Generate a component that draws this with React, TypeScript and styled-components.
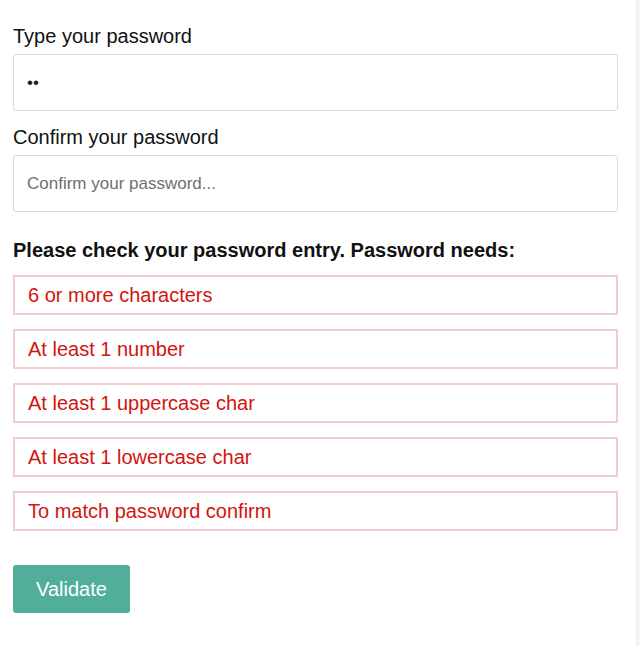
import React from "react";
import styled, { createGlobalStyle } from "styled-components";

const Global = createGlobalStyle`
  html, body { margin: 0; padding: 0; background: #fff; }
  body { font-family: "Liberation Sans", Arial, Helvetica, sans-serif; }
  * { box-sizing: border-box; }
`;

const Page = styled.div`
  width: 640px;
  min-height: 646px;
  display: flex;
`;

const Main = styled.form`
  flex: 1;
  padding: 24px 18px 0 13px;
  display: flex;
  flex-direction: column;
`;

const Edge = styled.div`
  width: 4px;
  background: #f3f3f8;
  border-left: 1px solid #ebebf2;
`;

const Label = styled.label`
  font-size: 20px;
  color: #111;
  line-height: 24px;
  margin-bottom: 6px;
`;

const Input = styled.input`
  height: 57px;
  width: 100%;
  border: 1px solid #dadada;
  border-radius: 3px;
  padding: 0 13px;
  font-family: inherit;
  font-size: 17px;
  color: #222;
  margin-bottom: 14px;
  outline: none;
  &::placeholder { color: #6f6f6f; }
`;

const Heading = styled.div`
  font-size: 20px;
  font-weight: bold;
  color: #111;
  line-height: 24px;
  margin-top: 12px;
  margin-bottom: 13px;
`;

const Rules = styled.ul`
  list-style: none;
  margin: 0;
  padding: 0;
  display: flex;
  flex-direction: column;
  gap: 14px;
`;

const Rule = styled.li<{ $ok?: boolean }>`
  height: 40px;
  border: 2px solid ${(p) => (p.$ok ? "#bfe3d6" : "#f1cdd1")};
  color: ${(p) => (p.$ok ? "#2a8a6c" : "#d3140f")};
  font-size: 20px;
  display: flex;
  align-items: center;
  padding-left: 13px;
`;

const Button = styled.button`
  margin-top: 34px;
  width: 117px;
  height: 48px;
  border: none;
  border-radius: 3px;
  background: #50ae9a;
  color: #fff;
  font-family: inherit;
  font-size: 20px;
  cursor: pointer;
`;

const rules = [
  "6 or more characters",
  "At least 1 number",
  "At least 1 uppercase char",
  "At least 1 lowercase char",
  "To match password confirm",
];

export default function App() {
  return (
    <>
      <Global />
      <Page>
        <Main onSubmit={(e) => e.preventDefault()}>
          <Label htmlFor="pw">Type your password</Label>
          <Input id="pw" type="password" defaultValue="ab" />
          <Label htmlFor="pw2">Confirm your password</Label>
          <Input id="pw2" type="password" placeholder="Confirm your password..." />
          <Heading>Please check your password entry. Password needs:</Heading>
          <Rules>
            {rules.map((r) => (
              <Rule key={r}>{r}</Rule>
            ))}
          </Rules>
          <div>
            <Button type="submit">Validate</Button>
          </div>
        </Main>
        <Edge />
      </Page>
    </>
  );
}
